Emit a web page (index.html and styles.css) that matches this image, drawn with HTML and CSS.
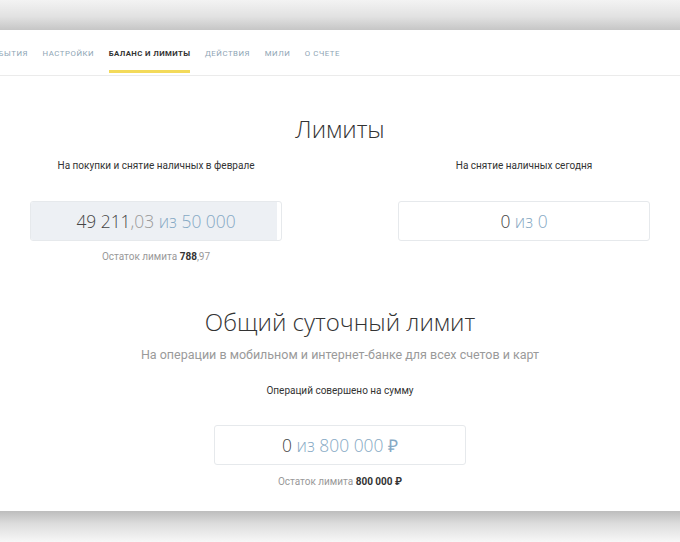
FILE: index.html
```html
<!DOCTYPE html>
<html lang="ru">
<head>
    <meta charset="UTF-8">
    <meta name="viewport" content="width=device-width, initial-scale=1.0">
    <title>Баланс и лимиты</title>
    <link rel="stylesheet" href="styles.css">
</head>
<body>
    <div class="shade-top"></div>
    <div class="card">
        <nav class="tabs">
            <a class="tab">События</a>
            <a class="tab">Настройки</a>
            <a class="tab active">Баланс и лимиты</a>
            <a class="tab">Действия</a>
            <a class="tab">Мили</a>
            <a class="tab">О счете</a>
        </nav>

        <section class="limits">
            <h2 class="title">Лимиты</h2>
            <div class="columns">
                <div class="limit">
                    <div class="label">На покупки и снятие наличных в феврале</div>
                    <div class="meter">
                        <div class="fill" style="width: 98.4%"></div>
                        <div class="value"><span class="spent">49 211</span><span class="cents">,03</span> <span class="total">из 50 000</span></div>
                    </div>
                    <div class="rest">Остаток лимита <b>788</b>,97</div>
                </div>
                <div class="limit">
                    <div class="label">На снятие наличных сегодня</div>
                    <div class="meter">
                        <div class="value"><span class="spent">0</span> <span class="total">из 0</span></div>
                    </div>
                </div>
            </div>
        </section>

        <section class="daily">
            <h2 class="title">Общий суточный лимит</h2>
            <div class="subtitle">На операции в мобильном и интернет-банке для всех счетов и карт</div>
            <div class="limit single">
                <div class="label">Операций совершено на сумму</div>
                <div class="meter">
                    <div class="value"><span class="spent">0</span> <span class="total">из 800 000 ₽</span></div>
                </div>
                <div class="rest">Остаток лимита <b>800 000 ₽</b></div>
            </div>
        </section>
    </div>
    <div class="shade-bottom"></div>
</body>
</html>
```

FILE: styles.css
```css
* {
    margin: 0;
    padding: 0;
    box-sizing: border-box;
}

body {
    width: 680px;
    height: 542px;
    overflow: hidden;
    background: #fff;
    font-family: Roboto, "Liberation Sans", Arial, sans-serif;
    color: #333;
}

.shade-top {
    height: 30px;
    background: linear-gradient(#f3f3f3, #e2e2e2 55%, #c6c6c6);
}

.shade-bottom {
    height: 31px;
    background: linear-gradient(#bdbdbd, #dcdcdc 40%, #f7f7f7);
}

.card {
    height: 481px;
    background: #fff;
    overflow: hidden;
}

/* tabs */
.tabs {
    display: flex;
    gap: 14.5px;
    height: 46px;
    margin-left: -13px;
    border-bottom: 1px solid #ebebeb;
}

.tab {
    display: flex;
    align-items: center;
    height: 45px;
    padding-top: 1px;
    font-size: 7.8px;
    letter-spacing: 0.55px;
    text-transform: uppercase;
    color: #8ea4b4;
}

.tab.active {
    color: #333;
    font-weight: 700;
    letter-spacing: 0.4px;
    box-shadow: inset 0 -2px 0 #fff, inset 0 -5px 0 #f3da5a;
}

/* headings */
.title {
    font-family: "Open Sans", sans-serif;
    font-weight: 300;
    font-size: 24px;
    line-height: 32px;
    text-align: center;
    color: #333;
}

.limits {
    padding-top: 37px;
}

.columns {
    display: grid;
    grid-template-columns: 252px 252px;
    gap: 116px;
    padding: 0 30px;
    margin-top: 14px;
}

.label {
    font-size: 10px;
    line-height: 14px;
    text-align: center;
    color: #333;
}

.meter {
    position: relative;
    height: 40px;
    margin-top: 28px;
    border: 1px solid #e6e9ec;
    border-radius: 3px;
    overflow: hidden;
    background: #fff;
}

.fill {
    position: absolute;
    top: 0;
    bottom: 0;
    left: 0;
    background: #edf0f4;
}

.value {
    position: relative;
    line-height: 38px;
    text-align: center;
    font-family: "Open Sans", sans-serif;
    font-weight: 300;
    font-size: 17.4px;
}

.spent {
    color: #444;
}

.cents {
    color: #999;
}

.total {
    color: #86a9c4;
}

.rest {
    margin-top: 9px;
    font-size: 10px;
    line-height: 14px;
    text-align: center;
    color: #999;
}

.rest b {
    color: #333;
    font-weight: 700;
}

/* daily limit */
.daily {
    padding-top: 42px;
}

.subtitle {
    margin-top: 9px;
    font-size: 12.5px;
    line-height: 16px;
    text-align: center;
    color: #9a9a9a;
}

.single {
    width: 252px;
    margin: 21px auto 0;
}

.single .meter {
    margin-top: 27px;
}

.single .rest {
    margin-top: 10px;
}
```
